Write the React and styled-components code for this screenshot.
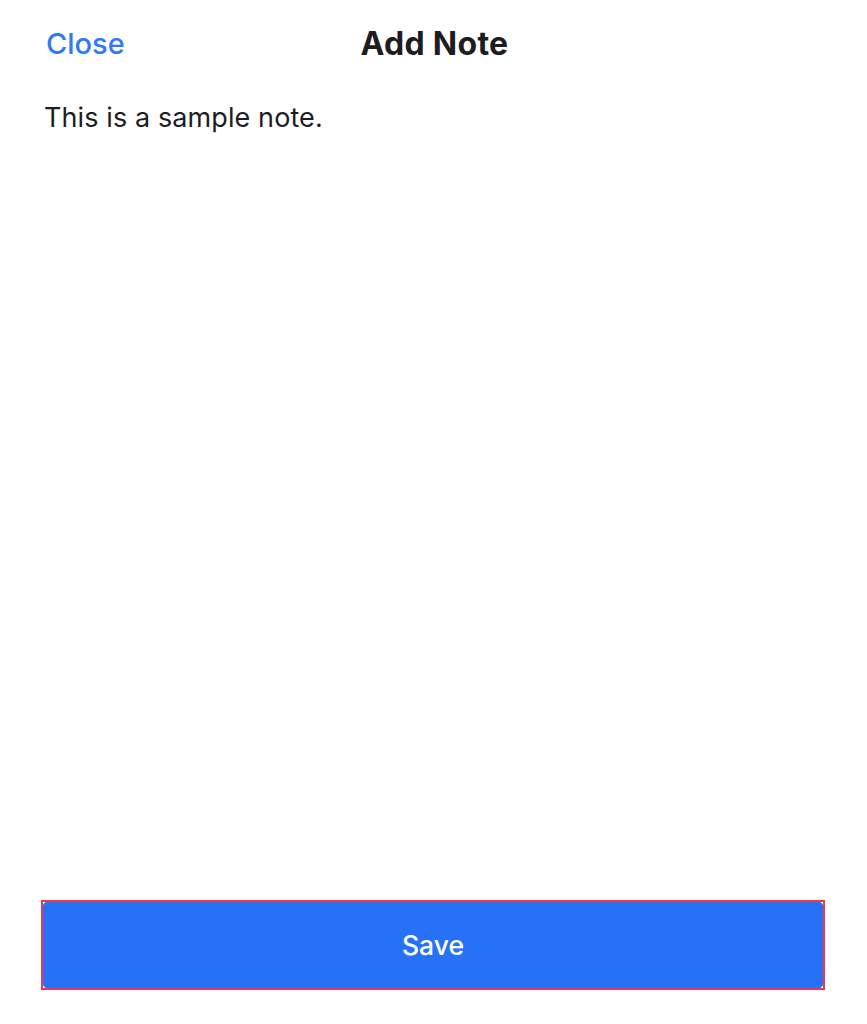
import React from 'react';
import styled, { createGlobalStyle } from 'styled-components';

const GlobalStyle = createGlobalStyle`
  html, body {
    margin: 0;
    padding: 0;
    background: #ffffff;
  }
  body {
    font-family: Inter, "Liberation Sans", sans-serif;
    -webkit-font-smoothing: antialiased;
  }
`;

const Sheet = styled.div`
  display: flex;
  flex-direction: column;
  height: 100vh;
  background: #ffffff;
  box-sizing: border-box;
`;

const Header = styled.header`
  position: relative;
  display: flex;
  align-items: center;
  justify-content: center;
  height: 86px;
  padding: 0 44px 0 46px;
`;

const CloseButton = styled.button`
  position: absolute;
  left: 46px;
  top: 50%;
  transform: translateY(-50%);
  border: none;
  background: none;
  padding: 0;
  font-family: inherit;
  font-size: 29px;
  font-weight: 500;
  color: #2f79f6;
  cursor: pointer;
`;

const Title = styled.h1`
  margin: 0;
  font-size: 32px;
  font-weight: 700;
  letter-spacing: 0.3px;
  color: #1d1d1f;
`;

const NoteBody = styled.div`
  flex: 1;
  padding: 15px 44px 0 44px;
  font-size: 27px;
  line-height: 34px;
  letter-spacing: 0.1px;
  color: #1d1d1f;
`;

const Footer = styled.div`
  padding: 0 42px 34px 41px;
`;

const ButtonFrame = styled.div`
  position: relative;
  height: 90px;

  &::after {
    content: '';
    position: absolute;
    inset: 0;
    border: 2px solid #f4364c;
    pointer-events: none;
  }
`;

const SaveButton = styled.button`
  position: relative;
  width: 100%;
  height: 100%;
  border: none;
  border-radius: 11px;
  background: #2771f7;
  color: #ffffff;
  font-family: inherit;
  font-size: 26.5px;
  font-weight: 500;
  cursor: pointer;

  &::before {
    content: '';
    position: absolute;
    inset: 10px -2px;
    border-radius: 50% / 50%;
    background: #2771f7;
    z-index: -1;
  }
`;

export default function App() {
  return (
    <>
      <GlobalStyle />
      <Sheet>
        <Header>
          <CloseButton>Close</CloseButton>
          <Title>Add Note</Title>
        </Header>
        <NoteBody>This is a sample note.</NoteBody>
        <Footer>
          <ButtonFrame>
            <SaveButton>Save</SaveButton>
          </ButtonFrame>
        </Footer>
      </Sheet>
    </>
  );
}
